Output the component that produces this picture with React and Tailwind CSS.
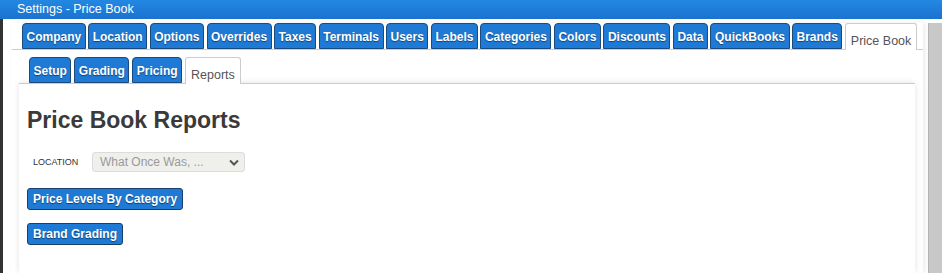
import React from "react";

const mainTabs = [
  "Company",
  "Location",
  "Options",
  "Overrides",
  "Taxes",
  "Terminals",
  "Users",
  "Labels",
  "Categories",
  "Colors",
  "Discounts",
  "Data",
  "QuickBooks",
  "Brands",
];

const subTabs = ["Setup", "Grading", "Pricing"];

const BlueTab = ({ label }) => (
  <div className="shrink-0 h-[26px] px-[3.5px] pt-[6px] pb-[4px] bg-[#1e7ad5] border border-[#1b4a7c] rounded-t-[4px] text-white font-bold text-[12px] leading-[14px] whitespace-nowrap [text-shadow:0_1px_1px_rgba(0,0,0,0.45)]">
    {label}
  </div>
);

const ActiveTab = ({ label }) => (
  <div className="shrink-0 h-[27px] -mb-px flex items-end px-[5px] pb-[2px] bg-white border border-b-0 border-[#cccccc] rounded-t-[3px] text-[#555555] text-[12.5px] leading-[14px] whitespace-nowrap">
    {label}
  </div>
);

const ReportButton = ({ children }) => (
  <button className="h-[22px] px-[5px] bg-[#1e7ad5] border border-[#1b3f6a] rounded-[3px] text-white font-bold text-[12px] leading-[14px] whitespace-nowrap [text-shadow:0_1px_1px_rgba(0,0,0,0.5)]">
    {children}
  </button>
);

export default function App() {
  return (
    <div className="w-[942px] h-[273px] overflow-hidden bg-white font-['Liberation_Sans',Arial,sans-serif]">
      {/* title bar */}
      <div className="h-[19px] pl-[17px] bg-gradient-to-b from-[#2388e2] to-[#1b72cf] text-white text-[12.5px] leading-[19px]">
        Settings - Price Book
      </div>

      <div className="flex h-[254px]">
        <div className="shrink-0 w-[3px] bg-[#333333]" />

        <div className="flex-1 min-w-0 pl-[9px] pr-[5px] pt-[4px] bg-white">
          <div className="h-full flex flex-col bg-white shadow-[2px_0_5px_rgba(0,0,0,0.08)]">
            {/* main tabs */}
            <div className="flex items-end gap-[2.5px] pl-[10px] border-b border-[#cccccc]">
              {mainTabs.map((t) => (
                <BlueTab key={t} label={t} />
              ))}
              <ActiveTab label="Price Book" />
            </div>

            {/* sub area */}
            <div className="flex-1 flex flex-col pl-[7px] pr-[8px] pt-[7px]">
              <div className="flex items-end gap-[3px] pl-[10px] relative z-10">
                {subTabs.map((t) => (
                  <BlueTab key={t} label={t} />
                ))}
                <ActiveTab label="Reports" />
              </div>

              <div className="flex-1 bg-white border-t border-[#cccccc] shadow-[0_0_6px_rgba(0,0,0,0.12)] pl-[8px] pt-[22px]">
                <h1 className="text-[23px] leading-[28px] font-bold text-[#3a3a3a]">
                  Price Book Reports
                </h1>

                <div className="flex items-center mt-[18px]">
                  <span className="ml-[6px] w-[46px] text-[9px] leading-[12px] text-[#333333] uppercase">
                    Location
                  </span>
                  <div className="ml-[13px] w-[153px] h-[20px] flex items-center justify-between pl-[7px] pr-[5px] bg-[#efefec] border border-[#dcdcdc] rounded-[3px]">
                    <span className="text-[12px] leading-[14px] text-[#9a9a9a] whitespace-nowrap">
                      What Once Was, ...
                    </span>
                    <svg width="10" height="7" viewBox="0 0 10 7">
                      <polyline
                        points="1,1.5 5,5.5 9,1.5"
                        fill="none"
                        stroke="#555555"
                        strokeWidth="2"
                      />
                    </svg>
                  </div>
                </div>

                <div className="flex mt-[16px]">
                  <ReportButton>Price Levels By Category</ReportButton>
                </div>
                <div className="flex mt-[13px]">
                  <ReportButton>Brand Grading</ReportButton>
                </div>
              </div>
            </div>
          </div>
        </div>

        <div className="shrink-0 w-[14px] mt-[4px] bg-[#c8c8c8] border-l border-[#b4b4b4]" />
      </div>
    </div>
  );
}
